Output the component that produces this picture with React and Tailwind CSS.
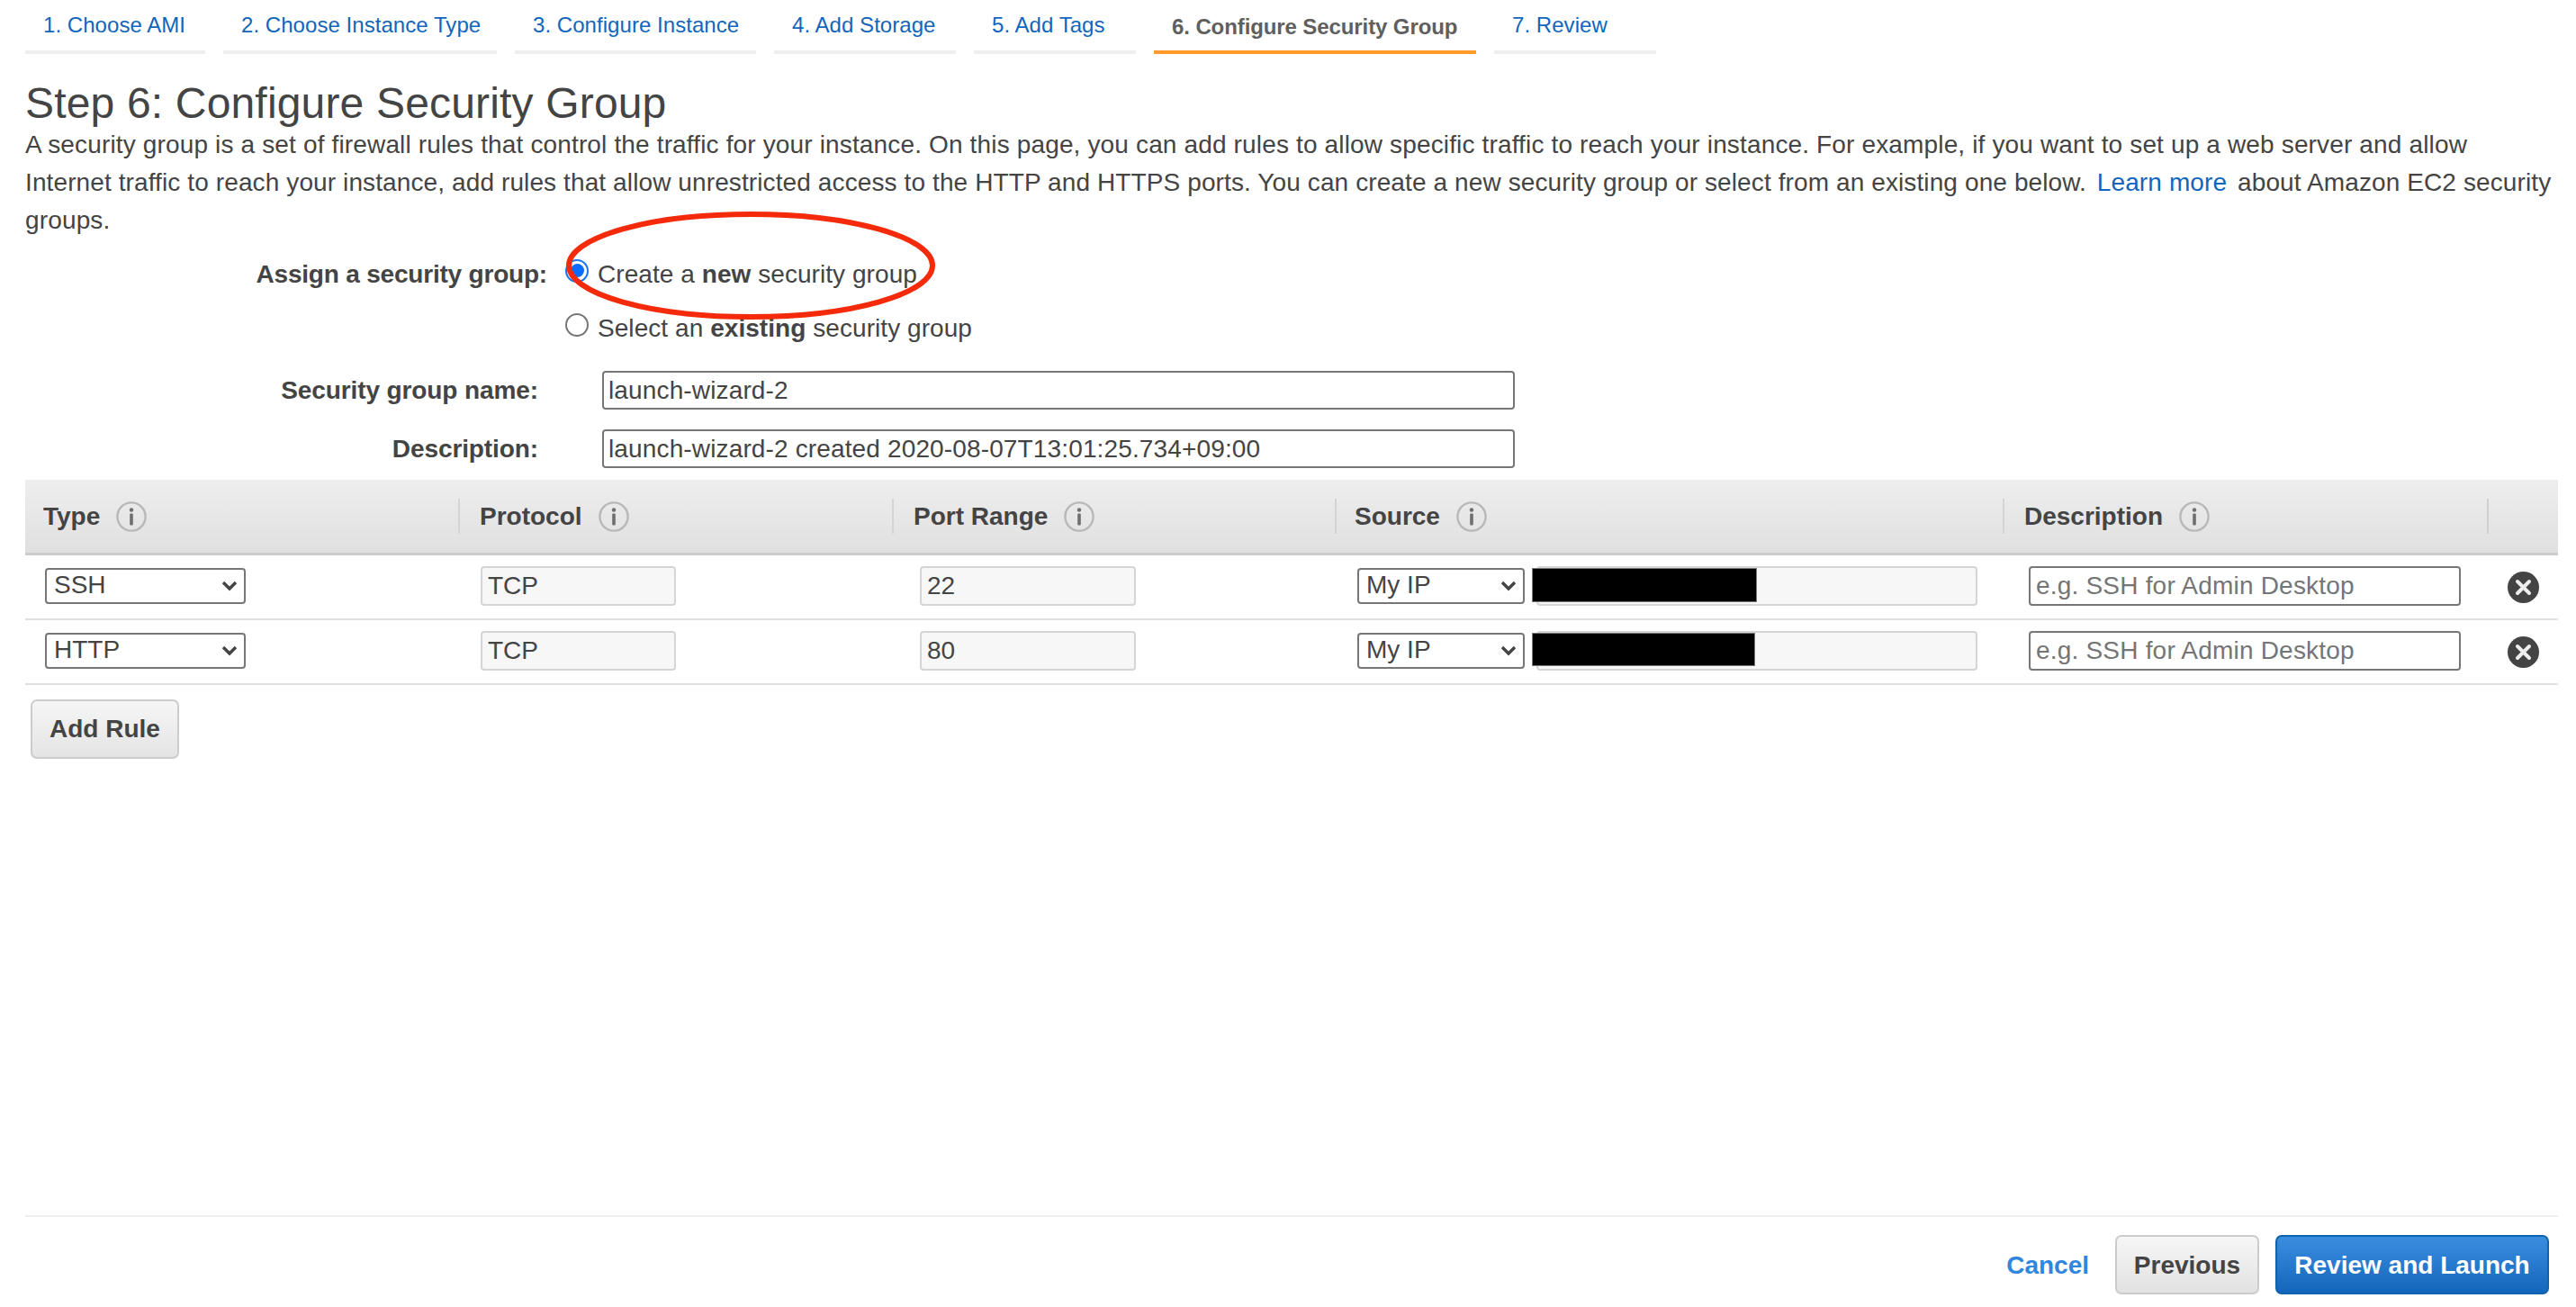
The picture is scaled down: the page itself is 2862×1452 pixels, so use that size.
import React from "react";

const tabs = [
  { label: "1. Choose AMI", width: "w-[200px]" },
  { label: "2. Choose Instance Type", width: "w-[304px]" },
  { label: "3. Configure Instance", width: "w-[268px]" },
  { label: "4. Add Storage", width: "w-[202px]" },
  { label: "5. Add Tags", width: "w-[180px]" },
  { label: "6. Configure Security Group", width: "w-[358px]", active: true },
  { label: "7. Review", width: "w-[180px]" },
];

const columns = "grid grid-cols-[481px_482px_492px_742px_538px_79px]";

const InfoIcon = () => (
  <svg width="34" height="34" viewBox="0 0 34 34" className="shrink-0">
    <circle cx="17" cy="17" r="15.6" fill="none" stroke="#b8b8b8" strokeWidth="2.4" />
    <circle cx="17" cy="9.5" r="2.2" fill="#6f6f6f" />
    <rect x="15.2" y="13.5" width="3.6" height="13" rx="1" fill="#6f6f6f" />
  </svg>
);

const CloseIcon = () => (
  <svg width="35" height="35" viewBox="0 0 35 35" className="mt-[3px]">
    <circle cx="17.5" cy="17.5" r="17.5" fill="#444" />
    <path d="M11 11 L24 24 M24 11 L11 24" stroke="#eee" strokeWidth="4" strokeLinecap="round" />
  </svg>
);

const HeaderCell = ({ label, first, pad }) => (
  <div className={`flex items-center h-[39px] gap-[18px] ${first ? "" : "border-l-2 border-[#d4d4d4]"} ${pad}`}>
    <span className="font-bold text-[28px]">{label}</span>
    <InfoIcon />
  </div>
);

const Select = ({ value, width }) => (
  <div className={`relative h-[40px] ${width}`}>
    <select
      defaultValue={value}
      className="appearance-none w-full h-full border-2 border-[#767676] rounded-[4px] bg-white pl-[8px] pb-[3px] text-[28px] leading-[32px] text-[#444] outline-none"
    >
      <option>{value}</option>
    </select>
    <svg width="18" height="12" viewBox="0 0 18 12" className="absolute right-[9px] top-[14px] pointer-events-none">
      <path d="M2 2 L9 9 L16 2" fill="none" stroke="#444" strokeWidth="3.4" />
    </svg>
  </div>
);

const ReadOnly = ({ value, width }) => (
  <input
    readOnly
    defaultValue={value}
    className={`h-[44px] ${width} border-2 border-[#d5d5d5] rounded-[4px] bg-[#f7f7f7] px-[6px] text-[28px] text-[#444] outline-none`}
  />
);

const Row = ({ type, port, barWidth, barHeight }) => (
  <div className={`${columns} h-[72px] border-b-2 border-[#e1e1e1] items-center pb-[2px]`}>
    <div className="pl-[22px]">
      <Select value={type} width="w-[223px]" />
    </div>
    <div className="pl-[25px]">
      <ReadOnly value="TCP" width="w-[217px]" />
    </div>
    <div className="pl-[31px]">
      <ReadOnly value={port} width="w-[240px]" />
    </div>
    <div className="pl-[25px] flex items-center gap-[13px]">
      <Select value="My IP" width="w-[186px]" />
      <div className="relative">
        <ReadOnly value="" width="w-[490px]" />
        <div className={`absolute left-[-5px] top-[2px] bg-black border border-[#777] ${barWidth} ${barHeight}`} />
      </div>
    </div>
    <div className="pl-[29px]">
      <input
        placeholder="e.g. SSH for Admin Desktop"
        className="h-[44px] w-[480px] border-2 border-[#767676] rounded-[4px] bg-white px-[6px] text-[28px] tracking-[0.2px] text-[#444] placeholder:text-[#757575] outline-none"
      />
    </div>
    <div className="pl-[23px] flex">
      <CloseIcon />
    </div>
  </div>
);

const Radio = ({ checked }) => (
  <span
    className={`flex items-center justify-center w-[26px] h-[26px] mb-[9px] rounded-full border-[2.5px] bg-white ${
      checked ? "border-[#1a73f0]" : "border-[#767676]"
    }`}
  >
    {checked && <span className="w-[15px] h-[15px] rounded-full bg-[#0a6cff]" />}
  </span>
);

const App = () => {
  return (
    <div className="relative w-[2862px] h-[1452px] overflow-hidden bg-white pl-[28px] pr-[20px] flex flex-col font-['Liberation_Sans',Arial,sans-serif] text-[#444]">
      {/* wizard steps */}
      <div className="flex gap-[20px]">
        {tabs.map((t) => (
          <div
            key={t.label}
            className={`${t.width} h-[60px] pl-[20px] border-b-4 ${
              t.active
                ? "pt-[14px] border-[#ff9a26] text-[#5f5f5f] font-bold tracking-[-0.1px]"
                : "pt-[12px] border-[#eeeeee] text-[#1166bb] tracking-[0.05px]"
            } text-[24px] leading-[32px] whitespace-nowrap`}
          >
            {t.label}
          </div>
        ))}
      </div>

      <h1 className="text-[48px] leading-[50px] pt-[30px] font-normal tracking-[0.17px]">Step 6: Configure Security Group</h1>
      <p className="text-[28px] leading-[42px] tracking-[0.15px]">
        A security group is a set of firewall rules that control the traffic for your instance. On this page, you can add
        rules to allow specific traffic to reach your instance. For example, if you want to set up a web server and allow
        <br />
        <span className="whitespace-nowrap tracking-[0.11px]">
          Internet traffic to reach your instance, add rules that allow unrestricted access to the HTTP and HTTPS ports. You
          can create a new security group or select from an existing one below.{" "}
          <a className="text-[#1166bb] mx-[4px]">Learn more</a> about Amazon EC2 security
        </span>
        <br />
        groups.
      </p>

      {/* assign security group */}
      <div className="flex mt-[9px] text-[28px]">
        <div className="w-[580px] h-[60px] flex items-center justify-end font-bold tracking-[-0.2px]">Assign a security group:</div>
        <div className="ml-[20px] flex flex-col tracking-[0.06px]">
          <label className="h-[60px] flex items-center gap-[10px]">
            <Radio checked />
            <span>
              Create a <b>new</b> security group
            </span>
          </label>
          <label className="h-[60px] flex items-center gap-[10px]">
            <Radio />
            <span>
              Select an <b>existing</b> security group
            </span>
          </label>
        </div>
      </div>

      <div className="flex items-center gap-[71px] mt-[17px] text-[28px]">
        <label className="w-[570px] text-right font-bold tracking-[-0.1px]">Security group name:</label>
        <input
          defaultValue="launch-wizard-2"
          className="w-[1014px] h-[43px] border-2 border-[#767676] rounded-[4px] px-[5px] tracking-[0.14px] text-[#444] outline-none"
        />
      </div>
      <div className="flex items-center gap-[71px] mt-[22px] text-[28px]">
        <label className="w-[570px] text-right font-bold tracking-[-0.1px]">Description:</label>
        <input
          defaultValue="launch-wizard-2 created 2020-08-07T13:01:25.734+09:00"
          className="w-[1014px] h-[43px] border-2 border-[#767676] rounded-[4px] px-[5px] tracking-[0.14px] text-[#444] outline-none"
        />
      </div>

      {/* rules table */}
      <div className={`${columns} mt-[13px] h-[84px] items-center bg-gradient-to-b from-[#eeeeee] to-[#e0e0e0] border-b-[3px] border-[#cccccc]`}>
        <HeaderCell label="Type" first pad="pl-[20px]" />
        <HeaderCell label="Protocol" pad="pl-[22px]" />
        <HeaderCell label="Port Range" pad="pl-[22px]" />
        <HeaderCell label="Source" pad="pl-[20px]" />
        <HeaderCell label="Description" pad="pl-[22px]" />
        <div className="h-[39px] border-l-2 border-[#d0d0d0]" />
      </div>
      <Row type="SSH" port="22" barWidth="w-[250px]" barHeight="h-[38px]" />
      <Row type="HTTP" port="80" barWidth="w-[248px]" barHeight="h-[37px]" />

      <button className="mt-[16px] ml-[6px] w-[165px] h-[66px] border-2 border-[#cccccc] rounded-[7px] bg-gradient-to-b from-[#f6f6f6] to-[#e4e4e4] font-bold text-[28px] text-[#444]">
        Add Rule
      </button>

      <div className="mt-auto border-t-2 border-[#eeeeee] pt-[20px] pb-[14px] pr-[10px] flex justify-end items-center text-[28px] font-bold">
        <a className="text-[#2e86de] mr-[29px] pt-[2px]">Cancel</a>
        <button className="w-[160px] h-[66px] mr-[18px] pt-[2px] border-2 border-[#cccccc] rounded-[7px] bg-gradient-to-b from-[#f6f6f6] to-[#e2e2e2] font-bold text-[#444]">
          Previous
        </button>
        <button className="w-[304px] h-[66px] pt-[2px] border-2 border-[#0f62ac] rounded-[7px] bg-gradient-to-b from-[#3a8ee0] to-[#1166bb] font-bold text-white">
          Review and Launch
        </button>
      </div>

      {/* red annotation round the first radio */}
      <svg width="420" height="130" viewBox="0 0 420 130" className="absolute left-[624px] top-[230px] pointer-events-none">
        <ellipse cx="210" cy="65" rx="202" ry="57" fill="none" stroke="#f52a0a" strokeWidth="6" />
      </svg>
    </div>
  );
};

export default App;
